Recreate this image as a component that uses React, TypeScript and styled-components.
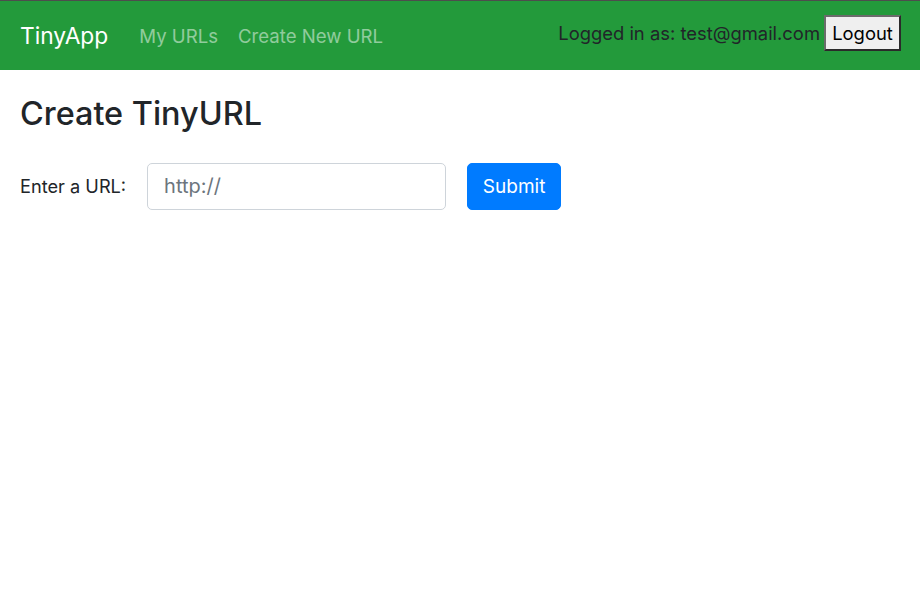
import React from "react";
import styled, { createGlobalStyle } from "styled-components";

const Global = createGlobalStyle`
  html, body { margin: 0; padding: 0; background: #fff; }
  body {
    font-family: Inter, "Noto Sans", "Liberation Sans", sans-serif;
    color: #212529;
    font-size: 16px;
  }
`;

const Nav = styled.nav`
  display: flex;
  align-items: center;
  justify-content: space-between;
  height: 69px;
  padding: 0 19px 0 20px;
  background: #239a3b;
  border-top: 1px solid #4d4d4d;
`;

const Left = styled.div`
  display: flex;
  align-items: center;
  gap: 20px;
`;

const Brand = styled.a`
  color: #fff;
  font-size: 22.8px;
  text-decoration: none;
  margin-right: 11px;
`;

const NavLink = styled.a`
  color: rgba(255, 255, 255, 0.5);
  font-size: 18.6px;
  text-decoration: none;
`;

const Right = styled.div`
  display: flex;
  align-items: center;
  gap: 4px;
  margin-bottom: 6px;
`;

const UserText = styled.span`
  color: #212529;
  font-size: 18.4px;
`;

const LogoutButton = styled.button`
  box-sizing: border-box;
  font-family: inherit;
  font-size: 18.4px;
  color: #000;
  background: #efefef;
  width: 77px;
  height: 36px;
  padding: 0;
  border-style: solid;
  border-width: 2px;
  border-color: #6b6b6b #2a2a2a #2a2a2a #6b6b6b;
`;

const Main = styled.main`
  padding: 25px 20px;
`;

const Title = styled.h2`
  margin: 0 0 29px;
  font-size: 32.4px;
  font-weight: 500;
  line-height: 1.2;
`;

const Form = styled.form`
  display: flex;
  align-items: center;
  gap: 21px;
`;

const Label = styled.label`
  font-size: 18.2px;
`;

const Input = styled.input`
  box-sizing: border-box;
  width: 299px;
  height: 47px;
  padding: 0 16px;
  font-family: inherit;
  font-size: 20px;
  color: #495057;
  border: 1px solid #ced4da;
  border-radius: 5px;
  &::placeholder { color: #6c757d; }
`;

const SubmitButton = styled.button`
  box-sizing: border-box;
  width: 94px;
  height: 47px;
  padding: 0;
  font-family: inherit;
  font-size: 19px;
  color: #fff;
  background: #007bff;
  border: 1px solid #007bff;
  border-radius: 5px;
`;

export default function App() {
  return (
    <>
      <Global />
      <Nav>
        <Left>
          <Brand href="#">TinyApp</Brand>
          <NavLink href="#">My URLs</NavLink>
          <NavLink href="#">Create New URL</NavLink>
        </Left>
        <Right>
          <UserText>Logged in as: test@gmail.com</UserText>
          <LogoutButton>Logout</LogoutButton>
        </Right>
      </Nav>
      <Main>
        <Title>Create TinyURL</Title>
        <Form onSubmit={(e) => e.preventDefault()}>
          <Label>Enter a URL:</Label>
          <Input type="text" placeholder="http://" />
          <SubmitButton type="submit">Submit</SubmitButton>
        </Form>
      </Main>
    </>
  );
}
